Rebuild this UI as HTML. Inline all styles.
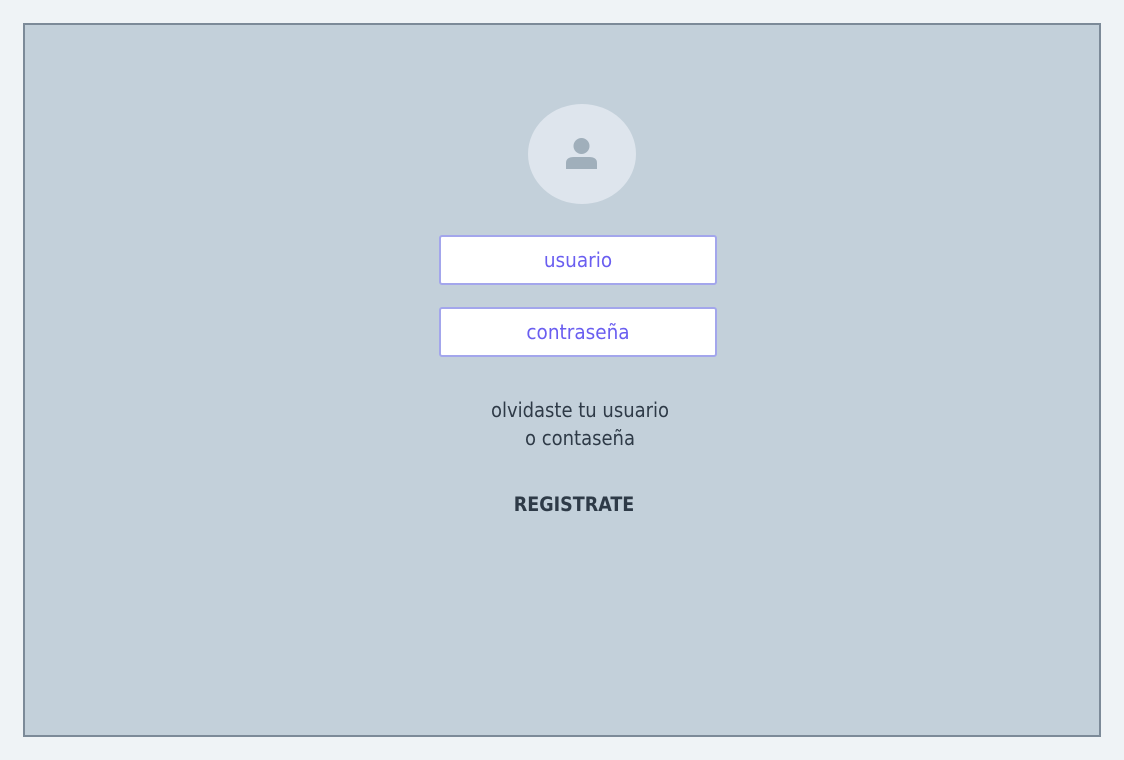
<!DOCTYPE html>
<html><head><style>
body{margin:0;width:1124px;height:760px;background:#eff3f6;font-family:"DejaVu Sans Condensed","Liberation Sans",sans-serif;position:relative;overflow:hidden}
.frame{position:absolute;left:23px;top:23px;width:1074px;height:710px;border:2px solid #7c8a98;background:#c3d0da}
.av{position:absolute;left:528px;top:104px;width:108px;height:100px;border-radius:50%;background:#dee5ed}
.in{position:absolute;left:439px;width:274px;height:46px;border:2px solid #a3a6ec;border-radius:3px;background:#fff;color:#6a5ef0;font-size:20.5px;text-align:center;line-height:46px}
.t{position:absolute;left:0;width:1160px;text-align:center;color:#2e3a47;font-size:20px}
</style></head><body>
<div class="frame"></div>
<div class="av"></div>
<svg style="position:absolute;left:560px;top:132px" width="44" height="44" viewBox="0 0 44 44"><circle cx="21.5" cy="14" r="8" fill="#a0afbb"/><path d="M6 37V31Q6 25 14 25H29Q37 25 37 31V37Z" fill="#a0afbb"/></svg>
<div class="in" style="top:235px">usuario</div>
<div class="in" style="top:307px">contraseña</div>
<div class="t" style="top:396px;line-height:28px">olvidaste tu usuario<br>o contaseña</div>
<div class="t" style="top:493px;font-weight:bold;font-size:19.5px;left:-6px">REGISTRATE</div>
</body></html>
